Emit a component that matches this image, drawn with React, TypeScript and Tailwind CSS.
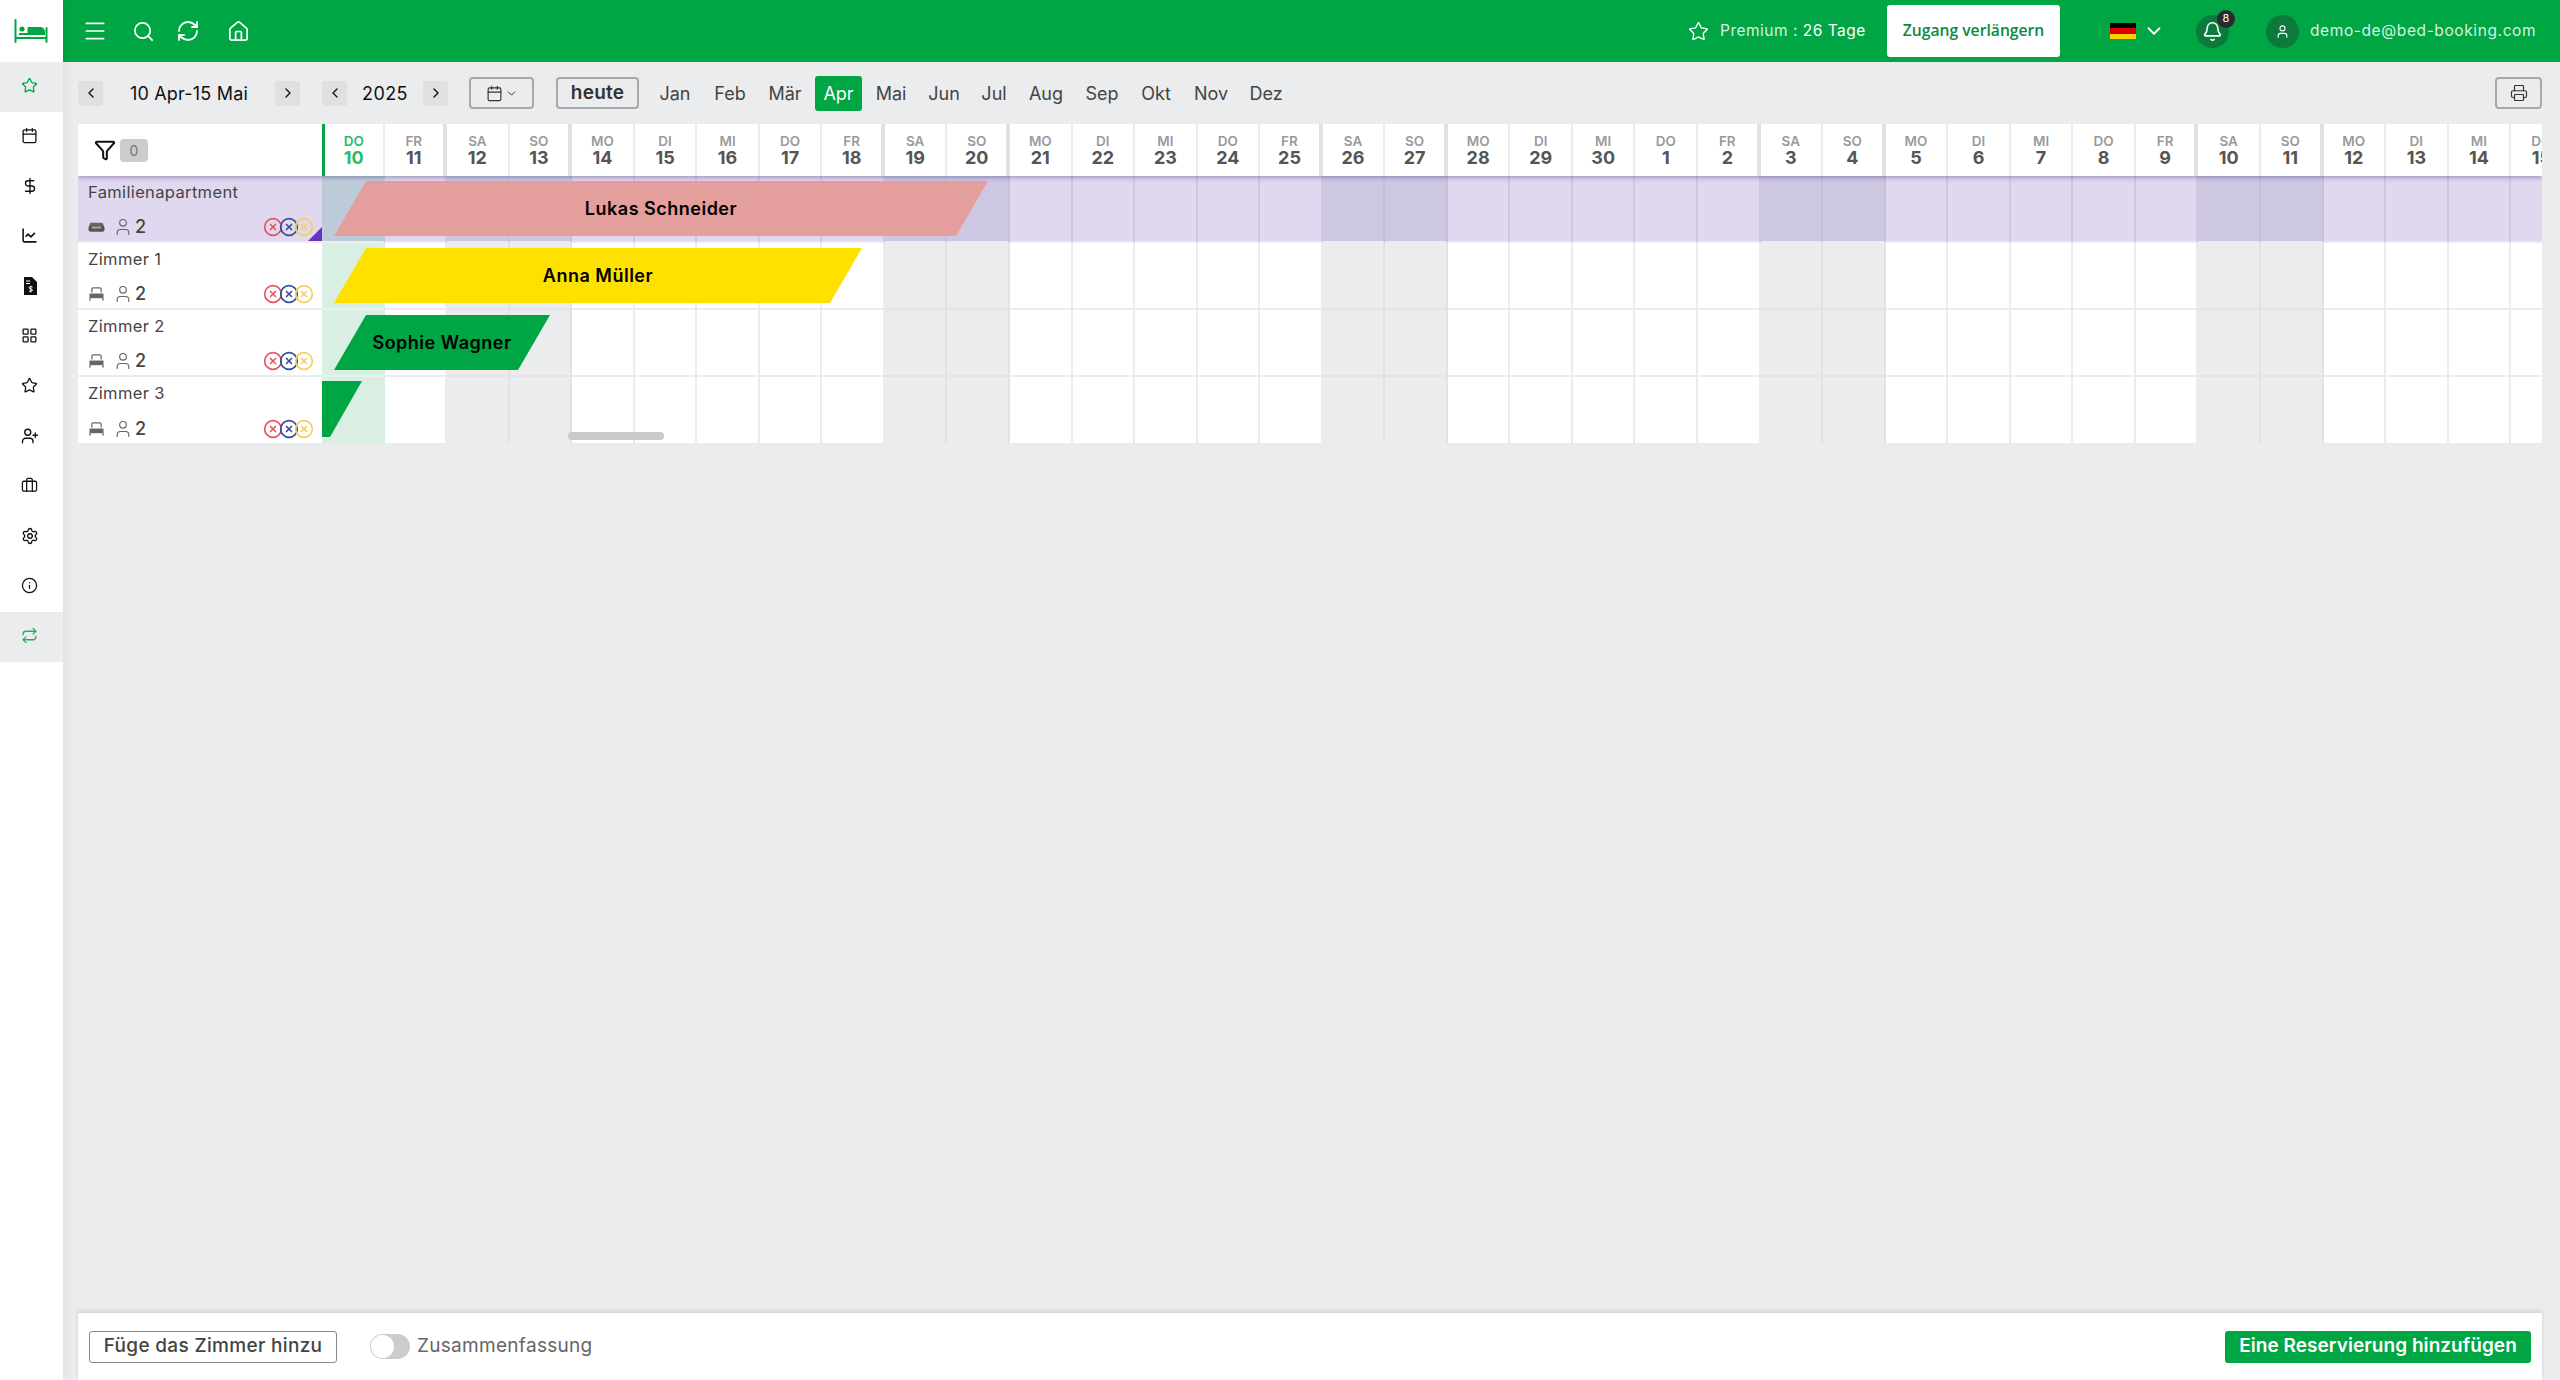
import {
  Bell,
  Briefcase,
  Calendar,
  ChartLine,
  ChevronDown,
  ChevronLeft,
  ChevronRight,
  CircleX,
  DollarSign,
  Funnel,
  House,
  Info,
  LayoutGrid,
  Menu,
  Printer,
  RefreshCw,
  Repeat,
  Search,
  Settings,
  Star,
  User,
  UserPlus,
} from "lucide-react";

const weekdays = ["DO", "FR", "SA", "SO", "MO", "DI", "MI"];
const dayNumbers = [
  10, 11, 12, 13, 14, 15, 16, 17, 18, 19, 20, 21, 22, 23, 24, 25, 26, 27, 28, 29, 30, 1, 2, 3, 4,
  5, 6, 7, 8, 9, 10, 11, 12, 13, 14, 15,
];
const days = dayNumbers.map((num, i) => ({ num, weekday: weekdays[i % 7], index: i }));

const months = [
  { label: "Jan", width: "w-[52px]" },
  { label: "Feb", width: "w-[58px]" },
  { label: "Mär", width: "w-[52px]" },
  { label: "Apr", width: "w-[47px] ml-[4px] h-[35px] rounded-[3px] bg-[#00a544] text-white" },
  { label: "Mai", width: "w-[58px]" },
  { label: "Jun", width: "w-[48px]" },
  { label: "Jul", width: "w-[52px]" },
  { label: "Aug", width: "w-[52px]" },
  { label: "Sep", width: "w-[60px]" },
  { label: "Okt", width: "w-[48px]" },
  { label: "Nov", width: "w-[62px]" },
  { label: "Dez", width: "w-[48px]" },
];

function BedLogo() {
  return (
    <svg width="34" height="24" viewBox="0 0 34 24" fill="none">
      <path d="M1.500 1v22M32.500 9v14" stroke="#00a544" strokeWidth="2" strokeLinecap="round" />
      <path d="M2 19h30" stroke="#00a544" strokeWidth="2" />
      <circle cx="8" cy="10" r="2.600" fill="#00a544" />
      <path d="M5 16v-2h8.500V9.500c0-1 .7-1.500 1.500-1.500h11c2.800 0 5 2.200 5 5v3z" fill="#00a544" />
    </svg>
  );
}

function InvoiceIcon() {
  return (
    <svg width="14" height="18" viewBox="0 0 14 18">
      <path d="M1 0h8l5 5v13H1z" fill="#111" />
      <path d="M3 4h4M3 6.500h4" stroke="#fff" strokeWidth="1" />
      <path d="M9.500 10.200c-.5-.7-3.500-.9-3.500.6 0 1.500 3.500.8 3.500 2.400 0 1.500-3 1.300-3.700.5M7.800 8.800v6.600" stroke="#fff" strokeWidth="1" fill="none" />
    </svg>
  );
}

function SmallBed() {
  return (
    <svg width="15" height="14" viewBox="0 0 16 15" fill="none">
      <path d="M3 6V2.500C3 1.500 3.700 1 4.500 1h7c.8 0 1.500.5 1.500 1.500V6" stroke="#666" strokeWidth="1.300" />
      <path d="M0.500 7h15v5H0.500z" fill="#666" />
      <path d="M1 12v2.500M15 12v2.500" stroke="#666" strokeWidth="1.500" />
    </svg>
  );
}

function SofaIcon() {
  return (
    <svg width="18" height="11" viewBox="0 0 18 11">
      <path d="M4 0.500h10c1.500 0 2.500 1 2.500 2.500v1h-15V3c0-1.500 1-2.500 1.500-2.500z" fill="#666" />
      <rect x="0.500" y="3.500" width="17" height="6.500" rx="2.500" fill="#555" />
      <rect x="4" y="4.500" width="10" height="2" fill="#aaa" />
    </svg>
  );
}

function StatusDots() {
  return (
    <div className="flex items-center">
      <CircleX size={20} strokeWidth={2} className="text-[#e8545c]" />
      <CircleX size={20} strokeWidth={2} className="-ml-[4.500px] text-[#34509a]" />
      <CircleX size={20} strokeWidth={2} className="-ml-[4.500px] text-[#f7ce55]" />
    </div>
  );
}

function NavButton({ dir }: { dir: "left" | "right" }) {
  return (
    <button className="flex h-[25px] w-[25px] items-center justify-center rounded-[3px] bg-[#e0e0e0] text-[#111]">
      {dir === "left" ? <ChevronLeft size={16} strokeWidth={2} /> : <ChevronRight size={16} strokeWidth={2} />}
    </button>
  );
}

function Sidebar() {
  const itemClass = "flex h-[50px] items-center justify-center pb-[3px] pr-[4px]";
  const plain = `${itemClass} text-[#111]`;
  return (
    <aside className="z-20 flex w-[63px] shrink-0 flex-col bg-white shadow-[3px_0_10px_rgba(0,0,0,0.05)]">
      <div className="flex h-[62px] items-center pl-[14px]">
        <BedLogo />
      </div>
      <div className={`${itemClass} bg-[#ebecee] text-[#00a544]`}>
        <Star size={17} strokeWidth={1.8} />
      </div>
      <div className={plain}>
        <Calendar size={17} strokeWidth={1.8} />
      </div>
      <div className={plain}>
        <DollarSign size={18} strokeWidth={1.8} />
      </div>
      <div className={plain}>
        <ChartLine size={17} strokeWidth={2.2} />
      </div>
      <div className={plain}>
        <InvoiceIcon />
      </div>
      <div className={plain}>
        <LayoutGrid size={17} strokeWidth={1.8} />
      </div>
      <div className={plain}>
        <Star size={17} strokeWidth={1.8} />
      </div>
      <div className={plain}>
        <UserPlus size={18} strokeWidth={1.8} />
      </div>
      <div className={plain}>
        <Briefcase size={17} strokeWidth={1.8} />
      </div>
      <div className={plain}>
        <Settings size={18} strokeWidth={1.8} />
      </div>
      <div className={plain}>
        <Info size={17} strokeWidth={1.8} />
      </div>
      <div className={`${itemClass} bg-[#ebecee] text-[#1fb35c]`}>
        <Repeat size={17} strokeWidth={1.8} />
      </div>
    </aside>
  );
}

function TopBar() {
  return (
    <header className="flex h-[62px] shrink-0 items-center bg-[#00a544] text-white">
      <Menu size={26} strokeWidth={1.6} className="ml-[19px]" />
      <Search size={23} strokeWidth={1.8} className="ml-[24px]" />
      <RefreshCw size={24} strokeWidth={1.8} className="ml-[21px]" />
      <House size={23} strokeWidth={1.8} className="ml-[27px]" />

      <Star size={21} strokeWidth={1.6} className="ml-auto" />
      <span className="ml-[11px] w-[146px] whitespace-nowrap text-[15.500px] tracking-[0.5px] text-[#d6f2e0]">
        Premium : <span className="text-white">26 Tage</span>
      </span>
      <button className="ml-[21px] h-[52px] w-[173px] rounded-[3px] bg-white font-['Open_Sans',sans-serif] text-[15.700px] font-semibold text-[#0a8a40]">
        Zugang verlängern
      </button>
      <div className="ml-[50px] flex h-[16px] w-[26px] flex-col">
        <div className="h-1/3 bg-black" />
        <div className="h-1/3 bg-[#dd0000]" />
        <div className="h-1/3 bg-[#ffce00]" />
      </div>
      <ChevronDown size={22} strokeWidth={2} className="ml-[7px]" />
      <div className="relative ml-[31px] flex h-[33px] w-[33px] items-center justify-center rounded-full bg-[#0b7a3c]">
        <Bell size={21} strokeWidth={1.8} />
        <span className="absolute -right-[6px] -top-[5px] flex h-[18px] w-[18px] items-center justify-center rounded-full bg-[#2a2a2a] text-[11px]">
          8
        </span>
      </div>
      <div className="ml-[37px] flex h-[33px] w-[33px] items-center justify-center rounded-full bg-[#0b7a3c]">
        <User size={15} strokeWidth={1.8} />
      </div>
      <span className="ml-[11px] mr-[24px] w-[226px] whitespace-nowrap text-[15.500px] tracking-[0.6px] text-[#d6f2e0]">
        demo-de@bed-booking.com
      </span>
    </header>
  );
}

function Toolbar() {
  return (
    <div className="flex h-[62px] shrink-0 items-center pl-[15px] pr-[18px]">
      <NavButton dir="left" />
      <span className="w-[172px] whitespace-nowrap text-center text-[18px] tracking-[0.2px] text-[#111]">10 Apr-15 Mai</span>
      <NavButton dir="right" />
      <div className="ml-[22px]">
        <NavButton dir="left" />
      </div>
      <span className="w-[76px] text-center text-[18px] tracking-[0.4px] text-[#111]">2025</span>
      <NavButton dir="right" />
      <button className="ml-[21px] flex h-[32px] w-[65px] items-center justify-center gap-[2px] rounded-[4px] border-2 border-[#a8a8a8] text-[#333]">
        <Calendar size={17} strokeWidth={1.6} />
        <ChevronDown size={13} strokeWidth={1.8} />
      </button>
      <button className="ml-[22px] h-[32px] w-[83px] rounded-[4px] border-2 border-[#a8a8a8] text-[19px] font-semibold tracking-[0.2px] text-[#333]">
        heute
      </button>
      <div className="ml-[10px] flex items-center">
        {months.map((m) => (
          <span key={m.label} className={`flex items-center justify-center text-[18px] text-[#444] ${m.width}`}>
            {m.label}
          </span>
        ))}
      </div>
      <button className="ml-auto flex h-[32px] w-[47px] items-center justify-center rounded-[4px] border-2 border-[#a8a8a8] text-[#333]">
        <Printer size={18} strokeWidth={1.6} />
      </button>
    </div>
  );
}

function dayLineClass(weekday: string) {
  return weekday === "FR" || weekday === "SO" ? "border-r-4 border-[#e0e1e3]" : "border-r-2 border-[#ebecee]";
}

function TableHeader() {
  return (
    <div className="relative z-10 flex h-[52px] bg-white shadow-[0_2px_4px_rgba(60,40,110,0.35)]">
      <div className="flex w-[244px] shrink-0 items-center pl-[16px]">
        <Funnel size={22} strokeWidth={2.2} className="text-[#111]" />
        <span className="ml-[4px] flex h-[23px] w-[28px] items-center justify-center rounded-[4px] bg-[#cccccc] text-[14px] text-[#777]">
          0
        </span>
      </div>
      {days.map((d) => {
        const today = d.index === 0;
        return (
          <div
            key={d.index}
            className={`flex h-full w-[62.550px] shrink-0 flex-col items-center justify-center pt-[2px] ${dayLineClass(d.weekday)} ${
              today ? "border-l-[3px] border-l-[#00a544]" : ""
            }`}
          >
            <span className={`text-[13.500px] font-semibold leading-[13px] ${today ? "text-[#2bbb68]" : "text-[#9a9a9a]"}`}>
              {d.weekday}
            </span>
            <span className={`text-[18px] font-bold leading-[19px] ${today ? "text-[#2bbb68]" : "text-[#555]"}`}>
              {d.num}
            </span>
          </div>
        );
      })}
    </div>
  );
}

function cellClass(weekday: string, index: number, purple: boolean) {
  const weekend = weekday === "SA" || weekday === "SO";
  if (purple) {
    if (index === 0) return "bg-[#bdcbd9] border-r-[#bdcbd9] border-b-[#ebecee]";
    return weekend ? "bg-[#cdc7e2] border-r-[#c6bfdc] border-b-[#ebecee]" : "bg-[#e0d8ef] border-r-[#cfc7e2] border-b-[#ebecee]";
  }
  if (index === 0) return "bg-[#d9efe3] border-r-[#d9efe3] border-b-[#e6f4ec]";
  return weekend ? "bg-[#ebecee] border-r-[#e1e2e4] border-b-[#e3e4e6]" : "bg-white border-r-[#ebecee] border-b-[#ebecee]";
}

function Row({
  name,
  purple,
  last,
  children,
}: {
  name: string;
  purple?: boolean;
  last?: boolean;
  children?: React.ReactNode;
}) {
  const bottomLine = last ? "" : "border-b-2";
  return (
    <div className={`relative flex ${last ? "h-[66px]" : "h-[67px]"}`}>
      <div
        className={`relative flex w-[244px] shrink-0 flex-col justify-between border-[#ebecee] pb-[4px] pl-[10px] pt-[6px] text-[#444] ${bottomLine} ${
          purple ? "bg-[#e0d8ef]" : "bg-white"
        }`}
      >
        <span className="text-[16.500px] leading-[20px] tracking-[0.35px]">{name}</span>
        <div className="flex items-center">
          <span className="flex w-[17px] justify-center">{purple ? <SofaIcon /> : <SmallBed />}</span>
          <User size={20} strokeWidth={1.4} className="ml-[8px] text-[#666]" />
          <span className="ml-[2px] text-[18px] font-medium leading-[20px]">2</span>
          <div className="ml-auto mr-[8px]">
            <StatusDots />
          </div>
        </div>
        {purple && (
          <span className="absolute bottom-0 right-0 h-[14px] w-[14px] bg-[#6a30bf] [clip-path:polygon(100%_0,100%_100%,0_100%)]" />
        )}
      </div>
      {days.map((d) => (
        <div
          key={d.index}
          className={`h-full w-[62.550px] shrink-0 border-r-2 ${bottomLine} ${cellClass(d.weekday, d.index, !!purple)}`}
        />
      ))}
      {children}
    </div>
  );
}

function BookingBar({ name, className }: { name: string; className: string }) {
  return (
    <div
      className={`absolute top-[5px] flex h-[55px] items-center justify-center text-[18px] font-semibold tracking-[0.5px] text-black [clip-path:polygon(32px_0,100%_0,calc(100%-32px)_100%,0_100%)] ${className}`}
    >
      {name}
    </div>
  );
}

function BookingTable() {
  return (
    <div className="overflow-hidden">
      <TableHeader />
      <Row name="Familienapartment" purple>
        <BookingBar name="Lukas Schneider" className="left-[256px] w-[654px] bg-[#e49e9c]" />
      </Row>
      <Row name="Zimmer 1">
        <BookingBar name="Anna Müller" className="left-[256px] w-[528px] bg-[#ffe100]" />
      </Row>
      <Row name="Zimmer 2">
        <BookingBar name="Sophie Wagner" className="left-[256px] w-[216px] bg-[#00a544]" />
      </Row>
      <Row name="Zimmer 3" last>
        <div className="absolute left-[244px] top-[4px] h-[56px] w-[40px] bg-[#00a544] [clip-path:polygon(0_0,100%_0,8px_100%,0_100%)]" />
        <div className="absolute left-[490px] top-[55px] h-[8px] w-[96px] rounded-full bg-[#c9c9c9]" />
      </Row>
    </div>
  );
}

function BottomBar() {
  return (
    <div className="flex h-[67px] shrink-0 items-center bg-white pl-[11px] pr-[11px] shadow-[0_-2px_4px_rgba(0,0,0,0.12)]">
      <button className="h-[32px] w-[248px] rounded-[3px] border border-[#888] text-[19px] font-medium tracking-[0.33px] text-[#444]">
        Füge das Zimmer hinzu
      </button>
      <div className="ml-[33px] flex h-[25px] w-[40px] items-center rounded-full bg-[#cccccc] pl-[1px]">
        <span className="h-[23px] w-[23px] rounded-full bg-white" />
      </div>
      <span className="ml-[7px] text-[19px] tracking-[0.3px] text-[#666]">Zusammenfassung</span>
      <button className="ml-auto h-[32px] w-[306px] rounded-[3px] bg-[#00a544] text-[19px] font-semibold tracking-[0.05px] text-white">
        Eine Reservierung hinzufügen
      </button>
    </div>
  );
}

export default function App() {
  return (
    <div className="flex h-[1380px] w-[2560px] overflow-hidden bg-[#ebecee] font-['Inter',sans-serif]">
      <Sidebar />
      <div className="flex min-w-0 flex-1 flex-col">
        <TopBar />
        <Toolbar />
        <div className="flex min-h-0 flex-1 flex-col pl-[15px] pr-[18px]">
          <BookingTable />
          <div className="flex-1" />
          <BottomBar />
        </div>
      </div>
    </div>
  );
}
